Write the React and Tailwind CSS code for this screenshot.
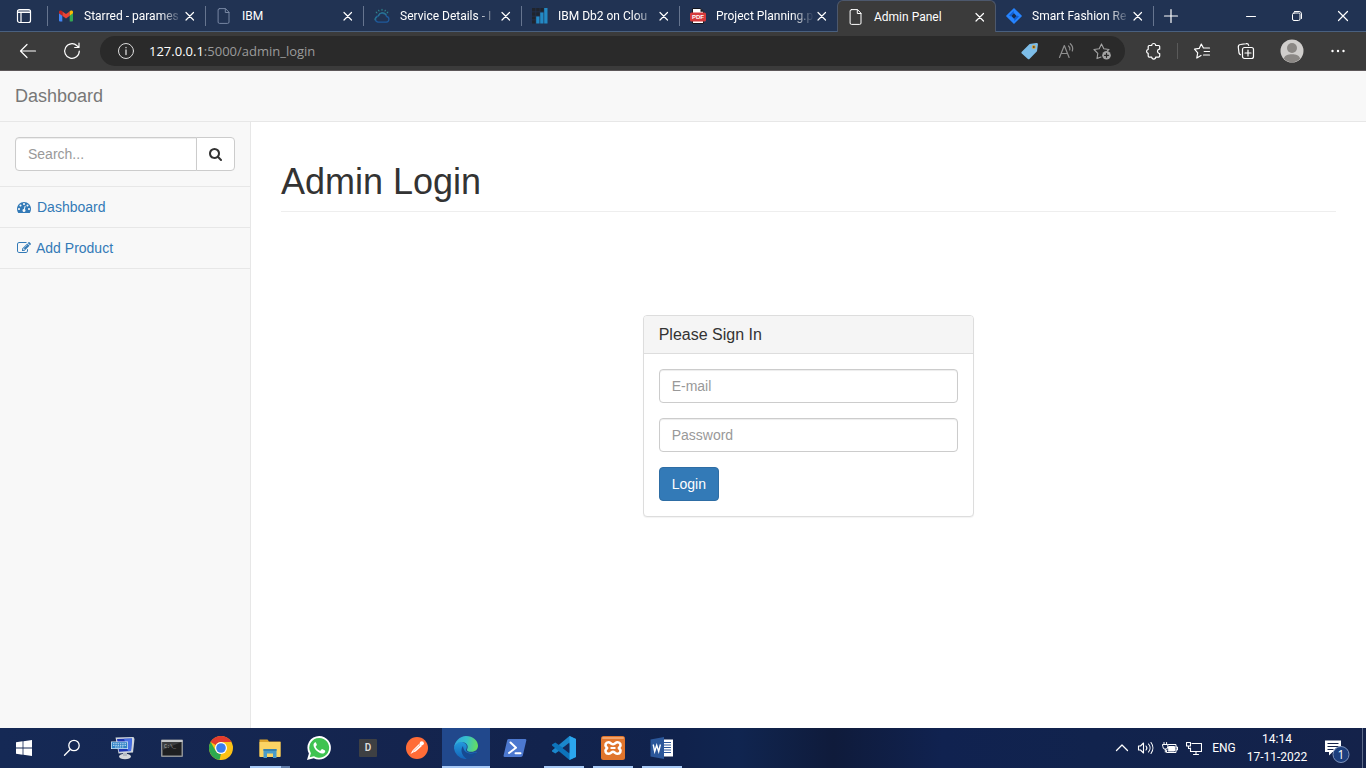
import React from "react";

/* ---------- generic drawing helpers ---------- */

function Line({ children, size = 16, box = 16, width = 1, className = "" }) {
  return (
    <svg
      width={size}
      height={size}
      viewBox={`0 0 ${box} ${box}`}
      fill="none"
      stroke="currentColor"
      strokeWidth={width}
      strokeLinecap="round"
      strokeLinejoin="round"
      className={`shrink-0 ${className}`}
      aria-hidden="true"
    >
      {children}
    </svg>
  );
}

function Glyph({ d }) {
  return (
    <svg width="14" height="14" viewBox="0 0 1792 1792" fill="currentColor" className="shrink-0" aria-hidden="true">
      <g transform="matrix(1 0 0 -1 0 1536)">
        <path d={d} fillRule="evenodd" />
      </g>
    </svg>
  );
}

const searchGlyph =
  "M1152 704q0 -185 -131.5 -316.5t-316.5 -131.5t-316.5 131.5t-131.5 316.5t131.5 316.5t316.5 131.5t316.5 -131.5t131.5 -316.5zM1664 -128q0 -52 -38 -90t-90 -38q-54 0 -90 38l-343 342q-179 -124 -399 -124q-143 0 -273.5 55.5t-225 150t-150 225t-55.5 273.5t55.5 273.5t150 225t225 150t273.5 55.5t273.5 -55.5t225 -150t150 -225t55.5 -273.5q0 -220 -124 -399l343 -343q37 -37 37 -90z";
const dashboardGlyph =
  "M384 384q0 53 -37.5 90.5t-90.5 37.5t-90.5 -37.5t-37.5 -90.5t37.5 -90.5t90.5 -37.5t90.5 37.5t37.5 90.5zM576 832q0 53 -37.5 90.5t-90.5 37.5t-90.5 -37.5t-37.5 -90.5t37.5 -90.5t90.5 -37.5t90.5 37.5t37.5 90.5zM1004 351l101 382q6 26 -7.5 48.5t-38.5 29.5t-48 -6.5t-30 -39.5l-101 -382q-60 -5 -107 -43.5t-63 -98.5q-20 -77 20 -146t117 -89t146 20t89 117q16 60 -6 117t-72 91zM1664 384q0 53 -37.5 90.5t-90.5 37.5t-90.5 -37.5t-37.5 -90.5t37.5 -90.5t90.5 -37.5t90.5 37.5t37.5 90.5zM1024 1024q0 53 -37.5 90.5t-90.5 37.5t-90.5 -37.5t-37.5 -90.5t37.5 -90.5t90.5 -37.5t90.5 37.5t37.5 90.5zM1472 832q0 53 -37.5 90.5t-90.5 37.5t-90.5 -37.5t-37.5 -90.5t37.5 -90.5t90.5 -37.5t90.5 37.5t37.5 90.5zM1792 384q0 -261 -141 -483q-19 -29 -54 -29h-1402q-35 0 -54 29q-141 221 -141 483q0 182 71 348t191 286t286 191t348 71t348 -71t286 -191t191 -286t71 -348z";
const editGlyph =
  "M888 352l116 116l-152 152l-116 -116v-56h96v-96h56zM1328 1072q-16 16 -33 -1l-350 -350q-17 -17 -1 -33t33 1l350 350q17 17 1 33zM1408 478v-190q0 -119 -84.5 -203.5t-203.5 -84.5h-832q-119 0 -203.5 84.5t-84.5 203.5v832q0 119 84.5 203.5t203.5 84.5h832q63 0 117 -25q15 -7 18 -23q3 -17 -9 -29l-49 -49q-14 -14 -32 -8q-23 6 -45 6h-832q-66 0 -113 -47t-47 -113v-832q0 -66 47 -113t113 -47h832q66 0 113 47t47 113v126q0 13 9 22l64 64q15 15 35 7t20 -29zM1312 1216l288 -288l-672 -672h-288v288zM1756 1084l-92 -92l-288 288l92 92q28 28 68 28t68 -28l152 -152q28 -28 28 -68t-28 -68z";

/* ---------- tab favicons ---------- */

const GmailIcon = () => (
  <svg width="16" height="16" viewBox="0 0 16 16" className="shrink-0" aria-hidden="true">
    <path d="M1 5v7.5a1 1 0 0 0 1 1h2.3V7.4L1 5z" fill="#4285f4" />
    <path d="M15 5v7.5a1 1 0 0 1-1 1h-2.3V7.4L15 5z" fill="#34a853" />
    <path d="M4.3 3.4v4.3L8 10.4l3.700-2.700V3.400L8 6.100 4.300 3.400z" fill="#ea4335" />
    <path d="M1 4v1.200l3.300 2.500V3.400l-.5-.4C2.600 2.100 1 2.700 1 4z" fill="#c5221f" />
    <path d="M15 4v1.200l-3.300 2.500V3.400l.5-.4C13.400 2.100 15 2.700 15 4z" fill="#fbbc04" />
  </svg>
);

const PageIcon = ({ className }) => (
  <Line className={className}>
    <path d="M3.500.6h6l3.500 3.600v9.800a1.400 1.400 0 0 1-1.400 1.400H3.500A1.400 1.400 0 0 1 2.100 14V2A1.400 1.400 0 0 1 3.500.6z" />
    <path d="M9.300.8v3.700h3.600" />
  </Line>
);

const CloudIcon = () => (
  <svg width="16" height="16" viewBox="0 0 16 16" fill="none" strokeLinecap="round" className="shrink-0" aria-hidden="true">
    <path d="M4 14.200h8.300a2.900 2.900 0 0 0 .4-5.700 4.400 4.400 0 0 0-8.300-.6A3.200 3.200 0 0 0 4 14.200z" stroke="#1f5a9c" strokeWidth="1.300" />
    <path d="M4.400 7.800A4.200 4.200 0 0 1 12 6.700M3 9C1.600 9.600.8 10.800 1 12" stroke="#2c7a8d" strokeWidth="1.100" />
    <path d="M2.200 4.200l.7.600M4.600 2.200l.4.800M8 1.300v.9M11.400 2.200l-.4.800M13.800 4.200l-.7.600" stroke="#2f8a90" strokeWidth="1.100" />
  </svg>
);

const Db2Icon = () => (
  <svg width="16" height="16" viewBox="0 0 16 16" className="shrink-0" aria-hidden="true">
    <path d="M0 0h3.500v3.500H0zM4.200 0h3.500v3.500H4.200zM8.400 0h3.300v3.500H8.400zM0 4.200h3.500v3.500H0zM4.200 4.200h3.500v3.500H4.200zM0 8.400h3.500v3.200H0zM0 12.200h3.500v3.300H0z" fill="#20242c" />
    <path d="M12.200 0h3.300v15.500h-3.300zM8.200 4.500h3.300v11H8.200zM4.200 8.500h3.300v7H4.200z" fill="#2389c4" />
  </svg>
);

const PdfIcon = () => (
  <svg width="16" height="16" viewBox="0 0 16 16" className="shrink-0" aria-hidden="true">
    <path d="M2.500.5h8.300l2.700 2.900v12.100h-11z" fill="#fff" stroke="#15151c" />
    <path d="M10.500.5v3.200h3z" fill="#15151c" />
    <rect y="4.600" width="16" height="8.800" rx="1.500" fill="#d53a3d" />
    <text x="8" y="11.300" textAnchor="middle" fontSize="6" fontWeight="700" fontFamily="Liberation Sans, sans-serif" fill="#fff">
      PDF
    </text>
  </svg>
);

const JiraIcon = () => (
  <svg width="16" height="16" viewBox="0 0 16 16" className="shrink-0" aria-hidden="true">
    <path d="M8 0l7.600 7.400a.8.800 0 0 1 0 1.200L8 16 .4 8.600a.8.800 0 0 1 0-1.200z" fill="#2684ff" />
    <path d="M8 2.500a3.500 3.500 0 0 0 0 3L4.800 8.500 3 7.500zM8 13.500a3.500 3.500 0 0 0 0-3l3.200-3 1.800 1z" fill="#0f5fd6" />
    <path d="M8 5.300L10.600 8 8 10.700 5.400 8z" fill="#152c52" />
  </svg>
);

const CloseIcon = () => (
  <Line size={16} width={1.2}>
    <path d="M4 4.500l7.500 7.500M11.500 4.500L4 12" />
  </Line>
);

const tabs = [
  { title: "Starred - parames", icon: <GmailIcon />, fades: true },
  { title: "IBM", icon: <PageIcon className="text-[#7787a3]" /> },
  { title: "Service Details - I", icon: <CloudIcon />, fades: true },
  { title: "IBM Db2 on Clou", icon: <Db2Icon />, fades: true },
  { title: "Project Planning.p", icon: <PdfIcon />, fades: true },
  { title: "Admin Panel", icon: <PageIcon className="text-white" />, active: true },
  { title: "Smart Fashion Re", icon: <JiraIcon />, fades: true },
];

function Tab({ tab, beforeActive }) {
  return (
    <div
      className={
        tab.active
          ? "-ml-px flex w-[159px] items-center rounded-t-md border border-b-0 border-[#4d586c] bg-[#3b3b3b] pl-[10px] pr-[7px]"
          : "flex w-[158px] items-center border-b border-[#49607f] pl-[10px]"
      }
    >
      <div className="flex min-w-0 flex-1 items-center gap-[10px]">
        {tab.icon}
        <button
          type="button"
          className={
            tab.fades
              ? "flex-1 whitespace-nowrap text-left leading-4 [mask-image:linear-gradient(to_right,#000_78%,transparent_100%)]"
              : "flex-1 whitespace-nowrap text-left leading-4"
          }
        >
          {tab.title}
        </button>
      </div>
      <button type="button" aria-label={`Close ${tab.title}`} className="flex w-4 justify-center">
        <CloseIcon />
      </button>
      {!tab.active && <span className={beforeActive ? "ml-[7px] h-5 w-px" : "ml-[7px] h-5 w-px bg-[#66758f]"} />}
    </div>
  );
}

function ToolButton({ label, className = "w-11", children }) {
  return (
    <button type="button" aria-label={label} className={`flex h-8 shrink-0 items-center justify-center ${className}`}>
      {children}
    </button>
  );
}

function BrowserChrome() {
  return (
    <header className="text-white">
      <div className="flex h-8 bg-[#213353] font-[Roboto,sans-serif] text-[12px]">
        <div className="flex w-12 shrink-0 items-center justify-end border-b border-[#49607f]">
          <button type="button" aria-label="Tab actions" className="mr-[15px]">
            <Line width={1.2}>
              <rect x="1.500" y="1.500" width="13" height="13" rx="2" />
              <path d="M1.500 3h13M1.500 4.500h13M5 5v9" />
            </Line>
          </button>
          <span className="h-5 w-px bg-[#66758f]" />
        </div>
        {tabs.map((tab, i) => (
          <Tab key={tab.title} tab={tab} beforeActive={Boolean(tabs[i + 1] && tabs[i + 1].active)} />
        ))}
        <div className="flex flex-1 items-center justify-between border-b border-[#49607f]">
          <button type="button" aria-label="New tab" className="ml-[9px]">
            <Line width={1.2}>
              <path d="M8 1.500v13M1.500 8h13" />
            </Line>
          </button>
          <div className="flex">
            <ToolButton label="Minimise" className="w-[46px]">
              <Line>
                <path d="M3.500 8.500h9" />
              </Line>
            </ToolButton>
            <ToolButton label="Restore" className="w-[46px]">
              <Line>
                <rect x="3.500" y="5" width="7.500" height="7.500" rx="1.500" />
                <path d="M5.500 3.500h4.500a2.500 2.500 0 0 1 2.500 2.500v4.500" />
              </Line>
            </ToolButton>
            <ToolButton label="Close window" className="w-[46px]">
              <Line width={1.2}>
                <path d="M3.500 3.500l9 9M12.500 3.500l-9 9" />
              </Line>
            </ToolButton>
          </div>
        </div>
      </div>

      <div className="flex h-[39px] items-center border-b border-[#5c5759] bg-[#3b3b3b] px-1.5 font-['Open_Sans',sans-serif]">
        <ToolButton label="Back">
          <Line size={18} box={18} width={1.2}>
            <path d="M16.500 9H1.500M8 2.500L1.500 9 8 15.500" />
          </Line>
        </ToolButton>
        <ToolButton label="Refresh">
          <Line size={18} box={18} width={1.2}>
            <path d="M16.300 9A7.300 7.300 0 1 1 14 3.700l1.800 1.600M16 1.200v4.300h-4.300" />
          </Line>
        </ToolButton>
        <div className="ml-1.5 flex h-[30px] flex-1 items-center rounded-full bg-[#2a2a2a] pl-[17px] pr-[5px]">
          <Line size={18} box={18} className="text-[#dcdcdc]">
            <circle cx="9" cy="9" r="7.500" />
            <path d="M9 8v4.500M9 5.500v.2" strokeWidth="1.300" />
          </Line>
          <a href="#admin_login" className="ml-3.5 flex-1 text-[13px] leading-5 text-[#9b9b9b]">
            <span className="text-white">127.0.0.1</span>:5000/admin_login
          </a>
          <ToolButton label="Shopping" className="w-9">
            <svg width="18" height="18" viewBox="0 0 18 18" aria-hidden="true">
              <path d="M.8 9.800L8.600 1.900 15.200 1a1.500 1.500 0 0 1 1.700 1.700L16 9.300l-7.300 7.400a1.500 1.500 0 0 1-2.100 0L.8 11.500a1.200 1.200 0 0 1 0-1.700z" fill="#7dbde8" />
              <circle cx="12.800" cy="5" r="2" fill="#d9a441" />
              <circle cx="12.800" cy="5" r="1" fill="#5a4a2c" />
            </svg>
          </ToolButton>
          <ToolButton label="Read aloud" className="w-9 text-[#8f8f8f]">
            <Line size={18} box={18} width={1.2}>
              <path d="M2.500 15.500L7.300 3.500l4.800 12M4.200 11.500h6.200M11.500 4a3.500 3.500 0 0 1 1.300 3.800M13.300 1.700a7 7 0 0 1 2 7.300" />
            </Line>
          </ToolButton>
          <ToolButton label="Add to favourites" className="w-9 text-[#a3a3a3]">
            <Line size={18} box={18} width={1.1}>
              <path d="M8 15l-4 1.600.8-5.300L1 7.500l5.200-.8L8.500 1.900l2.300 4.800 5.200.8-1.600 1.300" />
              <circle cx="13.500" cy="13.300" r="4.300" fill="currentColor" stroke="none" />
              <path d="M13.500 11.300v4M11.500 13.300h4" stroke="#2a2a2a" strokeWidth="1.200" />
            </Line>
          </ToolButton>
        </div>
        <ToolButton label="Extensions" className="ml-2.5 w-9">
          <Line size={18} box={18} width={1.2}>
            <path d="M5.200 3.500h2.500a2 2 0 0 1 4 0h3a1 1 0 0 1 1 1v2.700h-.5a2.200 2.200 0 0 0 0 4.300h.5v2.600a1 1 0 0 1-1 1h-3a2 2 0 0 1-4 0H5.200a1 1 0 0 1-1-1v-2.700a2.100 2.100 0 0 1 0-4.100V4.500a1 1 0 0 1 1-1z" />
          </Line>
        </ToolButton>
        <span className="ml-1.5 mr-0.5 h-4 w-px bg-[#5a5a5a]" />
        <ToolButton label="Favourites">
          <Line size={18} box={18} width={1.2}>
            <path d="M8 13.500L3.800 16l.9-5.200L1.500 7.200l4.700-.8L8.300 2l2.100 4h6.100M11.200 9.500h5.300M10.500 13h6" />
          </Line>
        </ToolButton>
        <ToolButton label="Collections">
          <Line size={18} box={18} width={1.2}>
            <rect x="5.500" y="5.500" width="11" height="11" rx="2" />
            <path d="M11 8v6M8 11h6M3.500 12.700A2.500 2.500 0 0 1 2 11L1.300 5.200A2.500 2.500 0 0 1 3.500 2.500L9 1.700a2.300 2.300 0 0 1 2.700 1.800" />
          </Line>
        </ToolButton>
        <ToolButton label="Profile" className="w-12">
          <svg width="24" height="24" viewBox="0 0 24 24" aria-hidden="true">
            <circle cx="12" cy="12" r="11.500" fill="#d0cecc" />
            <circle cx="12" cy="9" r="5" fill="#8b8885" />
            <path d="M3.800 19.500c1-3.200 4-4.300 8.200-4.300s7.200 1.100 8.200 4.300A11.400 11.400 0 0 1 12 23.400a11.400 11.400 0 0 1-8.200-3.900z" fill="#8b8885" />
          </svg>
        </ToolButton>
        <ToolButton label="Settings and more">
          <svg width="16" height="16" viewBox="0 0 16 16" fill="currentColor" aria-hidden="true">
            <circle cx="2.500" cy="8" r="1.200" />
            <circle cx="8" cy="8" r="1.200" />
            <circle cx="13.500" cy="8" r="1.200" />
          </svg>
        </ToolButton>
      </div>
    </header>
  );
}

/* ---------- page ---------- */

const field =
  "h-[34px] w-full min-w-0 border border-[#ccc] bg-white px-3 text-[14px] leading-5 text-[#555] shadow-[inset_0_1px_1px_rgba(0,0,0,0.075)] outline-none placeholder:text-[#999]";

function Sidebar() {
  return (
    <aside className="w-[251px] shrink-0 border-r border-[#e7e7e7] bg-[#f8f8f8]">
      <form className="flex border-b border-[#e7e7e7] p-[15px]" onSubmit={(e) => e.preventDefault()}>
        <input type="text" aria-label="Search" placeholder="Search..." className={`${field} flex-1 rounded-l-[4px]`} />
        <button
          type="submit"
          aria-label="Search"
          className="-ml-px flex h-[34px] w-[39px] shrink-0 items-center justify-center rounded-r-[4px] border border-[#ccc] bg-white text-[#333]"
        >
          <Glyph d={searchGlyph} />
        </button>
      </form>
      <nav>
        <a href="#dashboard" className="flex h-[41px] items-center gap-1.5 border-b border-[#e7e7e7] px-[17px] text-[#337ab7]">
          <Glyph d={dashboardGlyph} />
          Dashboard
        </a>
        <a href="#add-product" className="flex h-[41px] items-center gap-[5px] border-b border-[#e7e7e7] px-[17px] text-[#337ab7]">
          <Glyph d={editGlyph} />
          Add Product
        </a>
      </nav>
    </aside>
  );
}

function LoginPage() {
  return (
    <div className="flex flex-1 flex-col bg-white font-['Liberation_Sans',sans-serif] text-[14px] leading-5 text-[#333]">
      <div className="flex h-[51px] shrink-0 items-center border-b border-[#e7e7e7] bg-[#f8f8f8] px-[15px]">
        <a href="#home" className="text-[18px] leading-5 text-[#777]">
          Dashboard
        </a>
      </div>
      <div className="flex flex-1">
        <Sidebar />
        <main className="min-w-0 flex-1 px-[30px] pt-10">
          <h1 className="border-b border-[#eee] pb-[9px] text-[36px] leading-10">Admin Login</h1>
          <div className="mt-[103px] grid grid-cols-3 gap-[30px]">
            <section className="col-start-2 rounded-[4px] border border-[#ddd] bg-white shadow-[0_1px_1px_rgba(0,0,0,0.05)]">
              <div className="rounded-t-[3px] border-b border-[#ddd] bg-[#f5f5f5] px-[15px] py-[10px]">
                <h2 className="text-[16px] leading-[17px]">Please Sign In</h2>
              </div>
              <form className="flex flex-col items-start gap-[15px] p-[15px]" onSubmit={(e) => e.preventDefault()}>
                <input type="email" aria-label="E-mail" placeholder="E-mail" className={`${field} rounded-[4px]`} />
                <input type="password" aria-label="Password" placeholder="Password" className={`${field} rounded-[4px]`} />
                <button type="submit" className="h-[34px] rounded-[4px] border border-[#2e6da4] bg-[#337ab7] px-3 text-white">
                  Login
                </button>
              </form>
            </section>
          </div>
        </main>
      </div>
    </div>
  );
}

/* ---------- taskbar ---------- */

const Svg = ({ w = 24, h = 24, children }) => (
  <svg width={w} height={h} viewBox={`0 0 ${w} ${h}`} aria-hidden="true">
    {children}
  </svg>
);

const WindowsIcon = () => (
  <Svg w={16} h={16}>
    <path d="M0 2.200L6.600 1.300v6.300H0zM7.400 1.200L16 0v7.600H7.400zM0 8.400h6.600v6.300L0 13.800zM7.400 8.400H16V16l-8.600-1.200z" fill="#fff" />
  </Svg>
);

const MagnifierIcon = () => (
  <Line size={18} box={18} width={1.3} className="text-white">
    <circle cx="11" cy="6.500" r="5.200" />
    <path d="M7.200 10.500L1.500 16.300" />
  </Line>
);

const RemoteKeyboardIcon = () => (
  <Svg>
    <ellipse cx="14" cy="20.500" rx="6" ry="2.800" fill="#d5d8dc" />
    <path d="M12 15h4v5h-4z" fill="#b4bac2" />
    <path d="M4.500 1.500L22.500 1l1 2-1.500 13.500-14.500 1z" fill="#cfd6de" />
    <path d="M6 3l15-.5-1 12.500L8 15.800z" fill="#1d35b4" />
    <path d="M13 2.800l8-.3-1 12.500-3 .2z" fill="#4670e4" />
    <path d="M0 5.500h17v7.500H0z" fill="#dcebf6" />
    <path d="M.7 6.200h15.600v6.100H.7z" fill="#2f82c6" />
    <path d="M2 7.700h13M2 9.400h13M4 11h9" stroke="#c9e2f5" strokeDasharray="1.500 .8" strokeWidth=".9" />
  </Svg>
);

const TerminalIcon = () => (
  <Svg>
    <rect x="1" y="3.500" width="22" height="17.500" rx="1" fill="#8d9196" />
    <path d="M1.500 4h21v2h-21z" fill="#c4c7ca" />
    <path d="M2.500 6h19v13.500h-19z" fill="#1e1f21" />
    <path d="M2.500 6h19L2.500 14z" fill="#3b3d40" />
    <text x="4" y="12" fontSize="5" fontFamily="Liberation Mono, monospace" fill="#b5b5b5">
      C:\_
    </text>
  </Svg>
);

const ChromeIcon = () => (
  <Svg>
    <circle cx="12" cy="12" r="12" fill="#fbc116" />
    <path d="M1.600 6A12 12 0 0 1 22.400 6H12a6 6 0 0 0-5.200 3z" fill="#e33b2e" />
    <path d="M1.600 6l5.200 9a6 6 0 0 0 5.200 3l-.5 6A12 12 0 0 1 1.600 6z" fill="#2da94f" />
    <path d="M12 24l5.200-9L12 18l-1.500 6z" fill="#fbc116" />
    <circle cx="12" cy="12" r="6" fill="#fff" />
    <circle cx="12" cy="12" r="4.800" fill="#3b7ded" />
  </Svg>
);

const FolderIcon = () => (
  <Svg>
    <path d="M1.500 3.500h8l1.500 2h11.500V20h-21z" fill="#dca32b" />
    <path d="M1.500 6h21v15h-21z" fill="#fbd464" />
    <path d="M5.500 13h13v9h-3.500v-4.500h-6V22H5.500z" fill="#4a9cc9" />
    <path d="M5.500 13h13v2h-13z" fill="#3681ad" />
  </Svg>
);

const WhatsAppIcon = () => (
  <Svg>
    <path d="M12.200 0a11.800 11.800 0 0 0-10.300 17.500L0 24l6.700-1.700A11.800 11.800 0 1 0 12.200 0z" fill="#fff" />
    <path d="M12.200 1.900A9.900 9.900 0 0 0 3.900 17.200L2.700 21.300l4.300-1.100A9.900 9.900 0 1 0 12.200 1.900z" fill="#3fc351" />
    <path d="M8.500 6.300c-1 .1-2.100 1.300-2 2.800.2 3.600 4.600 8.100 8.600 8.500 1.500.1 3-.9 3.100-2.200.1-.6-.1-.9-.5-1.100l-2.200-1.100c-.4-.2-.7-.1-1 .2l-.9 1.100c-.2.2-.5.300-.8.200-1.800-.8-3.100-2-4-3.700-.1-.3-.1-.5.100-.7l.8-1c.2-.3.2-.5.100-.8l-.9-2.100c-.1-.2-.2-.2-.4-.1z" fill="#fff" />
  </Svg>
);

const LetterTileIcon = () => (
  <span className="flex h-[18px] w-[18px] items-center justify-center rounded-[1px] bg-[#3e4043] text-[10px] font-semibold leading-none text-[#dedede]">
    D
  </span>
);

const PostmanIcon = () => (
  <Svg>
    <circle cx="12" cy="12" r="11" fill="#ff6c37" />
    <path d="M5.500 18l2.200-3.800 6-6 2.800.3.200 1.800-6 5.300-2.700 1z" fill="#fff" />
    <circle cx="16.800" cy="7.300" r="2.100" fill="#fff" />
    <path d="M8 15.500l7-6.500" stroke="#ff9a76" strokeWidth=".7" />
  </Svg>
);

const EdgeIcon = () => (
  <Svg>
    <defs>
      <linearGradient id="edgeTop" x1="0" y1=".4" x2="1" y2=".5">
        <stop offset="0" stopColor="#2fa5e0" />
        <stop offset=".5" stopColor="#36c0cc" />
        <stop offset="1" stopColor="#67df5b" />
      </linearGradient>
      <linearGradient id="edgeBody" x1="0" y1="0" x2="0" y2="1">
        <stop offset="0" stopColor="#2399dd" />
        <stop offset="1" stopColor="#1464b8" />
      </linearGradient>
    </defs>
    <path d="M0 12.500C.5 6.500 7 4.500 11 7.500c3 2.200 1.500 5 1 6-.6 1.600 1.500 3.500 5 3.500 2.200 0 4-.7 4.900-1.200.5-.3.900.2.600.7A12 12 0 0 1 0 12.500z" fill="url(#edgeBody)" />
    <path d="M9 10c-2.500 3-2.500 9 4.500 13.500 3.600-.5 6.800-2.800 8.600-6 .4-.8 0-1.300-.7-.9C16 19 9.500 17 9 10z" fill="#174a92" />
    <path d="M0 12C.5 5 6 0 12 0c7 0 12 4.700 12 9.800 0 3.700-2.800 6-6.500 6-3 0-5.200-1.200-4.400-2.600C15 10 12.500 6 7.800 6 4 6 1 8.500 0 12z" fill="url(#edgeTop)" />
  </Svg>
);

const PowerShellIcon = () => (
  <Svg>
    <path d="M5.500 3H22a1.300 1.300 0 0 1 1.300 1.600l-3.500 15A2 2 0 0 1 18 21H1.800A1.300 1.300 0 0 1 .6 19.400l3.500-15A1.500 1.500 0 0 1 5.500 3z" fill="#4c78cf" />
    <path d="M7.500 6.500l5.500 5.300-7 5.200M12.500 17.200h5" fill="none" stroke="#fff" strokeWidth="2" strokeLinecap="round" strokeLinejoin="round" />
  </Svg>
);

const VsCodeIcon = () => (
  <Svg>
    <path d="M17.500 0L24 3 3.300 17.600 0 15.600v-1z" fill="#1b87cc" />
    <path d="M17.500 24L24 21 3.300 6.400 0 8.400v1z" fill="#0d74bb" />
    <path d="M17.500 6.500v11L10.500 12z" fill="#14295a" />
    <path d="M17.500 0L24 3v18l-6.500 3z" fill="#2ba6ee" />
  </Svg>
);

const XamppIcon = () => (
  <Svg>
    <rect width="24" height="24" rx="2.500" fill="#e0752c" />
    <rect x="1" y="1" width="22" height="2" rx="1" fill="#f1a36b" />
    <path
      d="M7.300 6.300c2.400 0 3 2 4.700 2s2.300-2 4.700-2 4 3 1.800 5c-.9.800-.9.700 0 1.500 2.200 2 .6 5-1.800 5s-3-2-4.700-2-2.300 2-4.700 2-4-3-1.800-5c.9-.8.900-.7 0-1.500-2.200-2-.6-5 1.800-5z"
      fill="none"
      stroke="#fff"
      strokeWidth="2.600"
    />
    <path d="M9.500 12h5" stroke="#fff" strokeWidth="2" />
  </Svg>
);

const WordIcon = () => (
  <Svg>
    <path d="M12 3.500h11v17H12z" fill="#fff" />
    <path d="M14 6.500h7M14 9h7M14 11.500h7M14 14h7M14 16.500h7" stroke="#2b579a" strokeWidth="1.200" />
    <path d="M.5 3.500L14 1v22L.5 20.500z" fill="#2b579a" />
    <path d="M3.200 8.500l1.500 7 2-6.200 2 6.200 1.700-7" fill="none" stroke="#fff" strokeWidth="1.400" />
  </Svg>
);

const apps = [
  { name: "On-screen keyboard", icon: <RemoteKeyboardIcon /> },
  { name: "Command prompt", icon: <TerminalIcon /> },
  { name: "Chrome", icon: <ChromeIcon /> },
  { name: "File Explorer", icon: <FolderIcon />, state: "stacked" },
  { name: "WhatsApp", icon: <WhatsAppIcon /> },
  { name: "D", icon: <LetterTileIcon /> },
  { name: "Postman", icon: <PostmanIcon /> },
  { name: "Edge", icon: <EdgeIcon />, state: "active" },
  { name: "PowerShell", icon: <PowerShellIcon /> },
  { name: "Visual Studio Code", icon: <VsCodeIcon />, state: "open" },
  { name: "XAMPP", icon: <XamppIcon />, state: "open" },
  { name: "Word", icon: <WordIcon />, state: "open" },
];

const indicators = {
  active: "h-0.5 w-full bg-[#a6c8f5]",
  open: "h-0.5 w-10 bg-[#a6c8f5]",
  stacked: "h-0.5 w-10 bg-[linear-gradient(to_right,#a6c8f5_78%,#5f7ba8_78%)]",
  closed: "h-0.5 w-10",
};

function AppButton({ app }) {
  return (
    <button
      type="button"
      aria-label={app.name}
      className={app.state === "active" ? "flex w-12 flex-col items-center bg-[#21488c]" : "flex w-12 flex-col items-center"}
    >
      <span className="flex flex-1 items-center pt-0.5">{app.icon}</span>
      <span className={indicators[app.state || "closed"]} />
    </button>
  );
}

function Taskbar() {
  return (
    <footer className="flex h-10 shrink-0 justify-between bg-[linear-gradient(to_right,#152955_0%,#14244e_30%,#10224c_50%,#102550_54%,#0f1b3b_61%,#102250_69%,#11234d_80%,#14224a_100%)] font-[Roboto,sans-serif] text-[12px] text-white">
      <div className="flex">
        <button type="button" aria-label="Start" className="flex w-12 items-center justify-center">
          <WindowsIcon />
        </button>
        <button type="button" aria-label="Search Windows" className="flex w-12 items-center justify-center">
          <MagnifierIcon />
        </button>
        <div className="ml-[3px] flex gap-px">
          {apps.map((app) => (
            <AppButton key={app.name} app={app} />
          ))}
        </div>
      </div>
      <div className="flex items-center">
        <button type="button" aria-label="Hidden icons" className="flex w-6 justify-center">
          <Line width={1.3}>
            <path d="M2.500 10.500L8 5l5.500 5.500" />
          </Line>
        </button>
        <button type="button" aria-label="Volume" className="flex w-6 justify-center">
          <Line size={18} box={18} width={1.1}>
            <path d="M1.500 7v4h2l3 3V4l-3 3zM9 7a3 3 0 0 1 0 4M11.500 5a6 6 0 0 1 0 8M14 3.500a9 9 0 0 1 0 11" />
          </Line>
        </button>
        <button type="button" aria-label="Battery" className="flex w-6 justify-center">
          <Line size={16}>
            <path d="M6.500 4.500h7.500v8H4.500v-2M14 7h1.500v3H14" />
            <path d="M7 6.500h5.500v4.500H6.500z" fill="currentColor" />
            <path d="M.8 4.500h5v2.300a2.500 2.500 0 0 1-5 0zM2 2.500v2M4.600 2.500v2M3.300 9v3" />
          </Line>
        </button>
        <button type="button" aria-label="Network" className="flex w-6 justify-center">
          <Line size={16} width={1.1}>
            <path d="M6 3.500h9.500v8H4.500V8M10 11.500v3M7.500 14.500h5M.5 2.500h4v3.500h-4zM2.500 6v2.500h2" />
          </Line>
        </button>
        <button type="button" className="w-9 text-center leading-4">
          ENG
        </button>
        <button type="button" className="flex w-[70px] flex-col items-center gap-0.5 whitespace-nowrap leading-4">
          <span>14:14</span>
          <span>17-11-2022</span>
        </button>
        <button type="button" aria-label="1 notification" className="ml-3 flex w-[26px] justify-center pt-1.5">
          <Svg w={26} h={26}>
            <path d="M1 2.500h16v11.500H8.500L5 17.500V14H1z" fill="#fff" />
            <path d="M3.500 5.500h11M3.500 8.500h11M3.500 11.500h6" stroke="#14224a" strokeWidth="1.100" />
            <circle cx="17" cy="16.500" r="8" fill="#1d3f7d" stroke="#7d93bb" />
            <text x="17" y="20.500" textAnchor="middle" fontSize="12" fontFamily="Open Sans, sans-serif" fill="#fff">
              1
            </text>
          </Svg>
        </button>
        <button type="button" aria-label="Show desktop" className="ml-3 h-10 w-1 border-l border-[#5d6a88]" />
      </div>
    </footer>
  );
}

export default function App() {
  return (
    <div className="flex min-h-screen flex-col">
      <BrowserChrome />
      <LoginPage />
      <Taskbar />
    </div>
  );
}
